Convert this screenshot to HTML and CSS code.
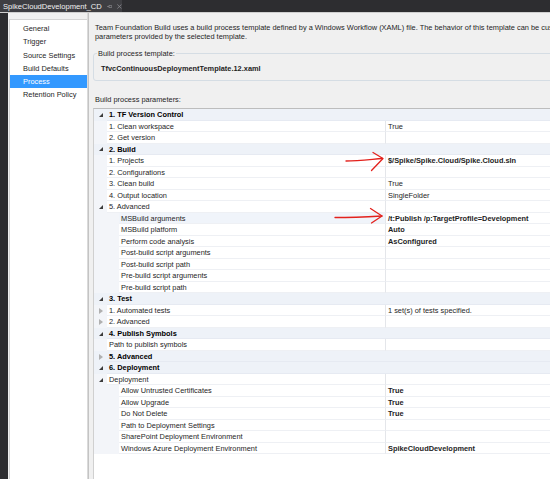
FILE: index.html
```html
<!DOCTYPE html>
<html>
<head>
	<title>SpikeCloudDevelopment_CD</title>
	<link rel="stylesheet" href="styles.css">
</head>
<body>

<div class="tabbar">
	<div class="tab">
		<span class="tab-title">SpikeCloudDevelopment_CD</span>
		<svg class="tab-icon" width="8" height="7" viewBox="0 0 8 7"><path d="M0 3.5h3M3 1.5v4M3 2h4v3H3" fill="none" stroke="#8a8a8f" stroke-width="1"/></svg>
		<svg class="tab-icon" width="7" height="7" viewBox="0 0 7 7"><path d="M0.5 0.5l6 6M6.5 0.5l-6 6" stroke="#8a8a8f" stroke-width="1.2"/></svg>
	</div>
</div>

<div class="main">
	<div class="strip"></div>
	<div class="nav">
		<div class="nav-item">General</div>
		<div class="nav-item">Trigger</div>
		<div class="nav-item">Source Settings</div>
		<div class="nav-item">Build Defaults</div>
		<div class="nav-item selected">Process</div>
		<div class="nav-item">Retention Policy</div>
	</div>
	<div class="splitter"></div>

	<div class="content">
		<p class="desc">Team Foundation Build uses a build process template defined by a Windows Workflow (XAML) file. The behavior of this template can be customized by setting the build process<br>parameters provided by the selected template.</p>

		<fieldset class="template">
			<legend>Build process template:</legend>
			<div class="tpl-name">TfvcContinuousDeploymentTemplate.12.xaml</div>
		</fieldset>

		<div class="params-label">Build process parameters:</div>

		<div class="grid">
			<div class="row cat"><span class="exp open"></span><span class="name">1. TF Version Control</span></div>
			<div class="row"><span class="exp"></span><span class="name">1. Clean workspace</span><span class="val">True</span></div>
			<div class="row"><span class="exp"></span><span class="name">2. Get version</span><span class="val"></span></div>
			<div class="row cat"><span class="exp open"></span><span class="name">2. Build</span></div>
			<div class="row"><span class="exp"></span><span class="name">1. Projects</span><span class="val b">$/Spike/Spike.Cloud/Spike.Cloud.sln</span></div>
			<div class="row"><span class="exp"></span><span class="name">2. Configurations</span><span class="val"></span></div>
			<div class="row"><span class="exp"></span><span class="name">3. Clean build</span><span class="val">True</span></div>
			<div class="row"><span class="exp"></span><span class="name">4. Output location</span><span class="val">SingleFolder</span></div>
			<div class="row"><span class="exp open"></span><span class="name">5. Advanced</span><span class="val"></span></div>
			<div class="row sel"><span class="exp"></span><span class="ind"></span><span class="name">MSBuild arguments</span><span class="val b">/t:Publish /p:TargetProfile=Development</span></div>
			<div class="row"><span class="exp"></span><span class="ind"></span><span class="name">MSBuild platform</span><span class="val b">Auto</span></div>
			<div class="row"><span class="exp"></span><span class="ind"></span><span class="name">Perform code analysis</span><span class="val b">AsConfigured</span></div>
			<div class="row"><span class="exp"></span><span class="ind"></span><span class="name">Post-build script arguments</span><span class="val"></span></div>
			<div class="row"><span class="exp"></span><span class="ind"></span><span class="name">Post-build script path</span><span class="val"></span></div>
			<div class="row"><span class="exp"></span><span class="ind"></span><span class="name">Pre-build script arguments</span><span class="val"></span></div>
			<div class="row"><span class="exp"></span><span class="ind"></span><span class="name">Pre-build script path</span><span class="val"></span></div>
			<div class="row cat"><span class="exp open"></span><span class="name">3. Test</span></div>
			<div class="row"><span class="exp closed"></span><span class="name">1. Automated tests</span><span class="val">1 set(s) of tests specified.</span></div>
			<div class="row"><span class="exp closed"></span><span class="name">2. Advanced</span><span class="val"></span></div>
			<div class="row cat"><span class="exp open"></span><span class="name">4. Publish Symbols</span></div>
			<div class="row"><span class="exp"></span><span class="name">Path to publish symbols</span><span class="val"></span></div>
			<div class="row cat"><span class="exp closed"></span><span class="name">5. Advanced</span></div>
			<div class="row cat"><span class="exp open"></span><span class="name">6. Deployment</span></div>
			<div class="row"><span class="exp open"></span><span class="name">Deployment</span><span class="val"></span></div>
			<div class="row"><span class="exp"></span><span class="ind"></span><span class="name">Allow Untrusted Certificates</span><span class="val b">True</span></div>
			<div class="row"><span class="exp"></span><span class="ind"></span><span class="name">Allow Upgrade</span><span class="val b">True</span></div>
			<div class="row"><span class="exp"></span><span class="ind"></span><span class="name">Do Not Delete</span><span class="val b">True</span></div>
			<div class="row"><span class="exp"></span><span class="ind"></span><span class="name">Path to Deployment Settings</span><span class="val"></span></div>
			<div class="row"><span class="exp"></span><span class="ind"></span><span class="name">SharePoint Deployment Environment</span><span class="val"></span></div>
			<div class="row"><span class="exp"></span><span class="ind"></span><span class="name">Windows Azure Deployment Environment</span><span class="val b">SpikeCloudDevelopment</span></div>
		</div>
	</div>
</div>

<!-- red marker arrows drawn over the screenshot -->
<svg class="marks" width="550" height="479" viewBox="0 0 550 479">
	<g fill="none" stroke="#e3211c" stroke-width="1.3" stroke-linecap="round" stroke-linejoin="round">
		<path d="M346 161 C358 161 370 159.5 382.5 158.5"/>
		<path d="M373 152.5 L383 158.5 L371.5 170.5"/>
		<path d="M335 217.5 C352 217.5 367 216.8 382 216"/>
		<path d="M370.5 208.5 L382 216 L371.5 223"/>
	</g>
</svg>

</body>
</html>
```

FILE: styles.css
```css
* {
	box-sizing: border-box;
}
html, body {
	margin: 0;
	padding: 0;
}
body {
	width: 550px;
	height: 479px;
	overflow: hidden;
	position: relative;
	background: #2d2d30;
	font-family: "Liberation Sans", Arial, sans-serif;
	font-size: 7.4px;
	color: #1e1e1e;
}

/* document tab */
.tabbar {
	height: 13px;
	background: #2d2d30;
	border-bottom: 1px solid #cfcfcf;
	display: flex;
}
.tab {
	width: 122px;
	background: #3e3e42;
	display: flex;
	align-items: center;
	padding-left: 3px;
	gap: 5px;
}
.tab-title {
	color: #f1f1f1;
	font-size: 7.6px;
}
.tab-icon {
	display: block;
}

/* main area */
.main {
	display: flex;
	height: 466px;
	background: #f0f0f0;
}
.strip {
	width: 8px;
	background: #2d2d30;
}
.nav {
	width: 78px;
	margin-top: 6px;
	margin-left: 1px;
	padding-top: 2px;
	background: #fff;
	border-top: 1px solid #d4d4d4;
	border-left: 1px solid #d4d4d4;
}
.nav-item {
	height: 13.3px;
	line-height: 13.3px;
	padding-left: 13px;
	white-space: nowrap;
}
.nav-item.selected {
	background: #3399ff;
	color: #fff;
}
.splitter {
	width: 2px;
	background: #c4c4c4;
	border-left: 1px solid #dadada;
}

.content {
	flex: 1;
	padding: 10px 0 0 6px;
	min-width: 0;
	overflow: hidden;
}
.desc {
	margin: 0;
	line-height: 9px;
	white-space: nowrap;
}

.template {
	margin: 8px 0 0 -2px;
	width: 600px;
	padding: 6px 0 7px 7px;
	border: 1px solid #d5dde4;
	border-radius: 3px;
}
.template legend {
	padding: 0 1px;
	margin-left: -4px;
	line-height: 9px;
}
.tpl-name {
	font-weight: bold;
	line-height: 9px;
}

.params-label {
	margin-top: 14px;
	line-height: 9px;
}

/* property grid */
.grid {
	margin: 4px 0 0 -2px;
	width: 600px;
	height: 400px;
	background: #fff;
	border-top: 1px solid #bdbdbd;
	border-left: 1px solid #d0d0d0;
}
.row {
	display: flex;
	height: 11.52px;
	line-height: 11.52px;
	white-space: nowrap;
}
.exp {
	width: 13px;
	flex: none;
	background: #f3f5f9;
	display: flex;
	align-items: center;
	justify-content: center;
}
.exp.open::before {
	content: "";
	width: 0;
	height: 0;
	border-left: 4px solid transparent;
	border-bottom: 4px solid #3c3c3c;
}
.exp.closed::before {
	content: "";
	width: 0;
	height: 0;
	border-top: 3px solid transparent;
	border-bottom: 3px solid transparent;
	border-left: 4px solid #b0b0b0;
}
.ind {
	width: 12px;
	flex: none;
	background: #f3f5f9;
}
.name {
	flex: 1;
	padding-left: 2px;
	border-bottom: 1px solid #eef0f4;
}
.val {
	width: 308px;
	flex: none;
	padding-left: 2px;
	border-left: 1px solid #e4e6ea;
	border-bottom: 1px solid #eef0f4;
}
.val.b {
	font-weight: bold;
}
.row.cat {
	background: #eef2f8;
}
.row.cat .exp {
	background: #eef2f8;
}
.row.cat .name {
	font-weight: bold;
	color: #000;
	border-bottom: 1px solid #e6eaf2;
}
.row.sel .name {
	background: #f0f4fa;
}

.marks {
	position: absolute;
	left: 0;
	top: 0;
	pointer-events: none;
}
```
